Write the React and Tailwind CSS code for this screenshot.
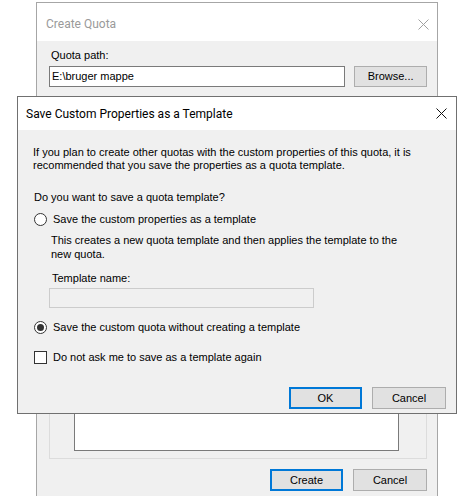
export default function App() {
  const body = { fontFamily: '"Liberation Sans", Arial, sans-serif' };
  const title = { fontFamily: 'Roboto, "Noto Sans", sans-serif' };

  return (
    <div className="relative w-[467px] h-[496px] overflow-hidden bg-white text-black" style={body}>
      {/* background window: Create Quota */}
      <div className="absolute left-[36px] top-[2px] w-[402px] h-[520px] border border-[#a6a6a6] bg-[#f0f0f0] flex flex-col">
        <div className="h-[38px] bg-white flex items-center justify-between pt-[4px] pl-[9px] pr-[8px] shrink-0">
          <span className="text-[12px] text-[#9a9a9a]" style={title}>Create Quota</span>
          <XIcon color="#a0a0a0" />
        </div>
        <div className="pl-[12px] pr-[10px] flex flex-col">
          <div className="text-[11px] leading-[13px] mt-[8px] ml-[2px]">Quota path:</div>
          <div className="flex mt-[4px] gap-[9px]">
            <div className="w-[297px] h-[21px] border border-[#7a7a7a] bg-white text-[11px] leading-[19px] px-[2px]">
              E:\bruger mappe
            </div>
            <button className="w-[73px] h-[21px] border border-[#adadad] bg-[#e1e1e1] text-[11px]">Browse...</button>
          </div>
          <div className="mt-[15px] h-[357px] border border-[#dcdcdc] flex flex-col justify-end pb-[7px]">
            <div className="ml-[24px] w-[325px] h-[200px] border border-[#7a7a7a] bg-white"></div>
          </div>
          <div className="flex justify-end gap-[10px] mt-[10px]">
            <button className="w-[73px] h-[22px] border-2 border-[#0078d7] bg-[#e1e1e1] text-[11px]">Create</button>
            <button className="w-[74px] h-[22px] border border-[#adadad] bg-[#e1e1e1] text-[11px]">Cancel</button>
          </div>
        </div>
      </div>

      {/* foreground dialog */}
      <div className="absolute left-[17px] top-[96px] w-[440px] h-[318px] border border-[#707070] bg-[#f0f0f0] flex flex-col">
        <div className="h-[33px] bg-white flex items-center justify-between pl-[8px] pr-[9px] shrink-0">
          <span className="text-[12px]" style={title}>Save Custom Properties as a Template</span>
          <XIcon color="#111" />
        </div>
        <div className="flex flex-col pl-[15px] pr-[10px] text-[11px] leading-[13px]">
          <p className="mt-[16px]">
            If you plan to create other quotas with the custom properties of this quota, it is
            <br />
            recommended that you save the properties as a quota template.
          </p>
          <div className="mt-[19px] ml-[1px]">Do you want to save a quota template?</div>
          <label className="flex items-center gap-[6px] mt-[9px] ml-[1px]">
            <Radio />
            <span>Save the custom properties as a template</span>
          </label>
          <p className="ml-[18px] mt-[7px] leading-[14px]">
            This creates a new quota template and then applies the template to the
            <br />
            new quota.
          </p>
          <div className="ml-[19px] mt-[11px]">Template name:</div>
          <div className="ml-[16px] mt-[3px] w-[265px] h-[20px] border border-[#cccccc] bg-[#f0f0f0]"></div>
          <label className="flex items-center gap-[6px] mt-[13px] ml-[1px]">
            <Radio checked />
            <span>Save the custom quota without creating a template</span>
          </label>
          <label className="flex items-center gap-[6px] mt-[17px] ml-[1px]">
            <span className="w-[13px] h-[13px] border border-[#333] bg-white shrink-0"></span>
            <span>Do not ask me to save as a template again</span>
          </label>
          <div className="flex justify-end gap-[10px] mt-[23px]">
            <button className="w-[73px] h-[22px] border-2 border-[#0078d7] bg-[#e1e1e1] text-[11px]">OK</button>
            <button className="w-[74px] h-[22px] border border-[#adadad] bg-[#e1e1e1] text-[11px]">Cancel</button>
          </div>
        </div>
      </div>
    </div>
  );
}

function Radio({ checked }) {
  return (
    <span className="w-[13px] h-[13px] rounded-full border border-[#333] bg-white shrink-0 flex items-center justify-center">
      {checked && <span className="w-[7px] h-[7px] rounded-full bg-[#333]"></span>}
    </span>
  );
}

function XIcon({ color }) {
  return (
    <svg width="11" height="11" viewBox="0 0 11 11">
      <path d="M0.5 0.5 L10.5 10.5 M10.5 0.5 L0.5 10.5" stroke={color} strokeWidth="1" fill="none" />
    </svg>
  );
}
